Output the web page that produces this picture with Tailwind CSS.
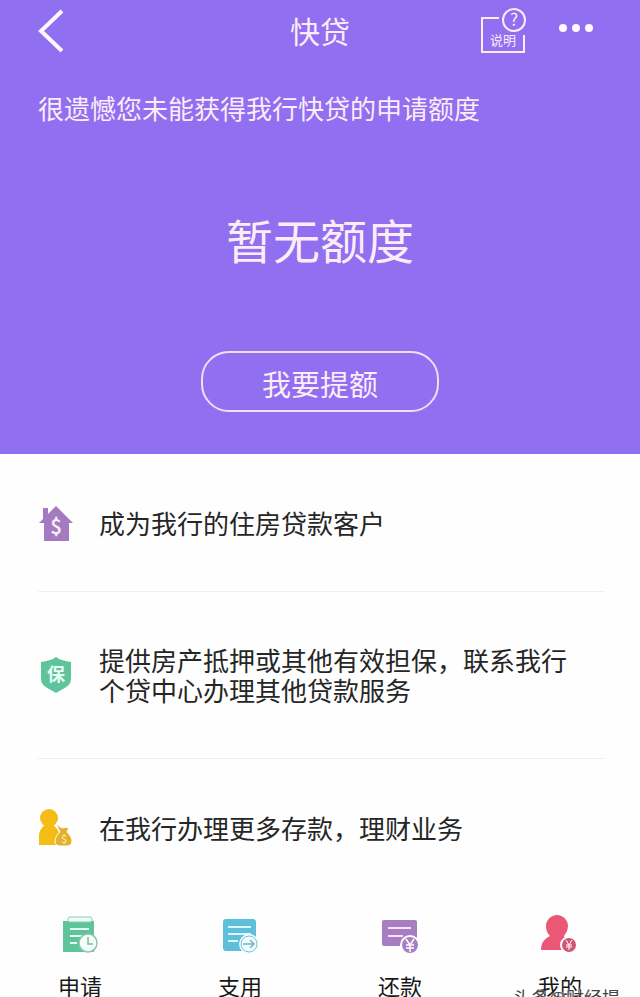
<!DOCTYPE html>
<html lang="zh-CN">
<head>
    <meta charset="UTF-8">
    <meta name="viewport" content="width=device-width, initial-scale=1.0">
    <title>快贷</title>
    <script src="https://cdn.jsdelivr.net/npm/@tailwindcss/browser@4"></script>
</head>
<body class="relative h-screen overflow-hidden bg-[#fefefe] font-['Noto_Sans_CJK_SC',sans-serif] text-[#262626]">
    <div class="bg-[#906ff0] text-[#fbecf8] pb-[42px]">
        <header class="grid grid-cols-[1fr_auto_1fr] items-center h-[60px] px-9">
            <a href="#" aria-label="返回" class="justify-self-start">
                <svg class="w-8 h-12" viewBox="0 0 32 48" fill="none" stroke="#fff8ff" stroke-width="4">
                    <path d="M26 5L5 25l21 20"/>
                </svg>
            </a>
            <h1 class="text-[30px] leading-8">快贷</h1>
            <div class="flex items-center justify-self-end gap-8 pr-2.5">
                <a href="#" aria-label="说明">
                    <svg class="w-12 h-12" viewBox="0 0 48 48" fill="none" stroke="currentColor" stroke-width="2">
                        <path d="M21 12H4v34h42V29"/>
                        <circle cx="36" cy="14" r="11"/>
                        <text x="36" y="20" text-anchor="middle" font-size="17" fill="currentColor" stroke="none">?</text>
                        <text x="25" y="39" text-anchor="middle" font-size="13" fill="currentColor" stroke="none">说明</text>
                    </svg>
                </a>
                <button type="button" aria-label="更多">
                    <svg class="w-9 h-12" viewBox="0 0 36 48" fill="#fff8ff">
                        <circle cx="5" cy="22" r="4"/>
                        <circle cx="18" cy="22" r="4"/>
                        <circle cx="31" cy="22" r="4"/>
                    </svg>
                </button>
            </div>
        </header>

        <p class="px-[38px] pt-8 text-[26px] leading-8">很遗憾您未能获得我行快贷的申请额度</p>
        <p class="pt-[83px] text-center text-[47px] leading-16">暂无额度</p>
        <div class="flex justify-center pt-20">
            <button type="button" class="w-[238px] h-[61px] rounded-[28px] border-2 border-[#f3dcf4] pt-0.5 text-[29px] leading-8">我要提额</button>
        </div>
    </div>

    <ul class="pl-[38px] pr-9 text-[26px] leading-[30px]">
        <li class="flex items-center gap-[25px] h-[138px] border-b border-[#eee]">
            <svg class="w-9 h-10 shrink-0" viewBox="0 0 36 40">
                <path fill="#a47bc0" d="M5 5h5v6l8-8 17 17h-4v18H6V20H1l4-4z"/>
                <text x="18" y="31" text-anchor="middle" font-size="20" fill="#fff3ff" stroke="#fff3ff" stroke-width="0.5">$</text>
            </svg>
            <p>成为我行的住房贷款客户</p>
        </li>
        <li class="flex items-center gap-[25px] h-[167px] border-b border-[#eee]">
            <svg class="w-9 h-10 shrink-0" viewBox="0 0 36 40">
                <path fill="#5fc49c" d="M18 2c4 3 9 4 15 5v17c0 7-7 9-15 14C10 33 3 31 3 24V7c6-1 11-2 15-5z"/>
                <text x="18" y="26" text-anchor="middle" font-size="18" font-weight="700" fill="#e8fff5">保</text>
            </svg>
            <p>提供房产抵押或其他有效担保，联系我行<br>个贷中心办理其他贷款服务</p>
        </li>
        <li class="flex items-center gap-[25px] h-[138px]">
            <svg class="w-9 h-10 shrink-0" viewBox="0 0 36 40" fill="#f3bd16">
                <circle cx="11" cy="10" r="9"/>
                <path d="M7 17h8c4 3 6 6 6 9-3 3-4 7-3 11H1V28c0-5 3-9 6-11z"/>
                <path fill="#e3b02c" stroke="#fefefe" d="M18 16l6 4 7-1-2 5c3 3 5 6 5 9 0 3-2 5-5 5h-7c-3 0-5-2-5-5 0-3 2-6 5-9z"/>
                <text x="26" y="35" text-anchor="middle" font-size="11" fill="#fff3b8">$</text>
            </svg>
            <p>在我行办理更多存款，理财业务</p>
        </li>
    </ul>

    <nav class="grid grid-cols-4 pt-[18px] text-[22px] leading-7 text-[#181818]">
        <a href="#" class="flex flex-col items-center gap-4">
            <svg class="w-10 h-10" viewBox="0 0 40 40">
                <path fill="#5ec49c" d="M3 6h31v31H3z"/>
                <rect x="8" y="2" width="24" height="5" rx="2" fill="#f2fff8" stroke="#8ccdb0"/>
                <path d="M10 14h19M10 21h12M10 28h7" stroke="#e6fff3" stroke-width="2"/>
                <circle cx="28" cy="28" r="9" fill="#f5fffa" stroke="#8fc4ae" stroke-width="1.5"/>
                <path d="M28 22v7h5" fill="none" stroke="#7dbba2" stroke-width="1.5"/>
            </svg>
            申请
        </a>
        <a href="#" class="flex flex-col items-center gap-4">
            <svg class="w-10 h-10" viewBox="0 0 40 40">
                <rect x="3" y="4" width="33" height="32" rx="3" fill="#5dbfd9"/>
                <path d="M8 12h23M8 19h23M8 26h10" stroke="#dcf8ff" stroke-width="2"/>
                <circle cx="29" cy="29" r="10" fill="#f3fdff"/>
                <circle cx="29" cy="29" r="8" fill="none" stroke="#7cc4d6"/>
                <path d="M23 29h11M30 25l4 4-4 4" fill="none" stroke="#6bb8cc" stroke-width="1.5"/>
            </svg>
            支用
        </a>
        <a href="#" class="flex flex-col items-center gap-4">
            <svg class="w-10 h-10" viewBox="0 0 40 40">
                <rect x="2" y="5" width="35" height="26" rx="2" fill="#a77fc0"/>
                <path d="M8 13h23M8 21h15" stroke="#f6e4ff" stroke-width="2"/>
                <circle cx="30" cy="30" r="9" fill="#a77fc0" stroke="#fff" stroke-width="2"/>
                <path d="M26 24l4 6 4-6M30 30v7M26 30h8M26 33h8" fill="none" stroke="#fff" stroke-width="1.5"/>
            </svg>
            还款
        </a>
        <a href="#" class="flex flex-col items-center gap-4">
            <svg class="w-10 h-10" viewBox="0 0 40 40">
                <path fill="#ea5876" d="M17 0c6 0 11 5 11 11 0 4-2 7-4 10 0 3 6 4 9 8v6H1c0-7 3-11 9-14-3-3-4-6-4-10C6 5 11 0 17 0z"/>
                <circle cx="29" cy="30" r="8" fill="#cf5670" stroke="#fff" stroke-width="2"/>
                <path d="M26 25l3 5 3-5M29 30v5M26 30h6M26 32h6" fill="none" stroke="#fff"/>
            </svg>
            我的
        </a>
    </nav>

    <!-- watermark, runs off the bottom edge -->
    <p class="absolute right-5 -bottom-3 text-[18px] leading-6 text-[#444] text-shadow-[0_0_2px_#fff,0_0_1px_#fff]">头条@财经提</p>
</body>
</html>
